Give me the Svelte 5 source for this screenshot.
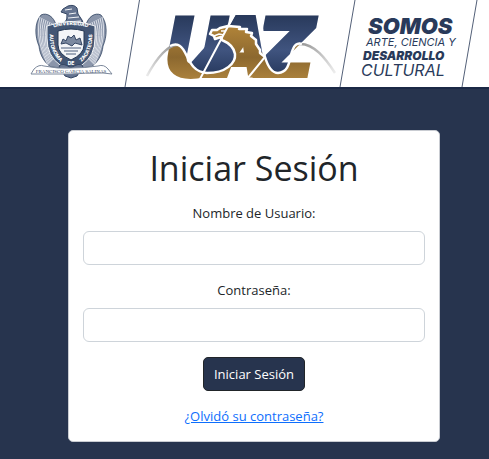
<script>
  let usuario = $state('');
  let clave = $state('');
  const wing = [0, 1, 2, 3, 4, 5, 6];
</script>

<header>
  <svg class="banner" viewBox="0 0 489 87" role="img" aria-label="Universidad Autónoma de Zacatecas">
    <defs>
      <linearGradient id="navy" x1="0" y1="16" x2="0" y2="78" gradientUnits="userSpaceOnUse">
        <stop offset="0" stop-color="#293a5c" />
        <stop offset=".55" stop-color="#40547f" />
        <stop offset="1" stop-color="#24365a" />
      </linearGradient>
      <linearGradient id="gold" x1="0" y1="26" x2="0" y2="78" gradientUnits="userSpaceOnUse">
        <stop offset="0" stop-color="#b18439" />
        <stop offset=".6" stop-color="#8c682f" />
        <stop offset="1" stop-color="#a9803c" />
      </linearGradient>
      <linearGradient id="tailLeft" x1="148" y1="75" x2="172" y2="45" gradientUnits="userSpaceOnUse">
        <stop offset="0" stop-color="#e8e8e8" />
        <stop offset="1" stop-color="#999" />
      </linearGradient>
      <linearGradient id="tailRight" x1="302" y1="44" x2="335" y2="73" gradientUnits="userSpaceOnUse">
        <stop offset="0" stop-color="#999" />
        <stop offset="1" stop-color="#eee" />
      </linearGradient>
      <pattern id="twoTone" width="489" height="87" patternUnits="userSpaceOnUse">
        <rect width="489" height="87" fill="url(#navy)" />
        <path fill="url(#gold)" d="M148 75C158 57 170 43 178 45C188 49 187 72 207 73C226 73 236 63 235 54C234 47 229 43 222 40L213 37L210 33L216 29L225 27L239 27L251 33L256 40L260 50L265 57C268 67 272 73 278 73C293 72 289 45 300 44C315 43 326 61 335 73V87H148Z" />
      </pattern>
      <path id="arcTop" d="M49 29Q71 21 93 29" />
      <path id="arcLeft" d="M50 31Q48 53 63 64" />
      <path id="arcRight" d="M79 64Q94 53 92 31" />
    </defs>

    <g class="crest">
      <g fill="#8a95aa" stroke="#354764" stroke-width=".8">
        <path d="M56 25C54 17 47 12 41 15C34 23 35 37 39 46C40 56 45 63 51 67L63 68Z" />
        <path d="M86 25C88 17 95 12 101 15C108 23 107 37 103 46C102 56 97 63 91 67L79 68Z" />
      </g>
      <g fill="none" stroke="#e4e8ee" stroke-width=".9">
        {#each wing as n}
          <path d="M{40 + n * 2} {17 + n}C{36 + n * 2} 33 {40 + n} 49 {48 + n} {65 - n}" />
          <path d="M{102 - n * 2} {17 + n}C{106 - n * 2} 33 {102 - n} 49 {94 - n} {65 - n}" />
        {/each}
      </g>
      <path d="M64 24Q68 19 67 14L61 12L63 9L68 6Q74 4 77 8L78 14L82 20L84 25Z" fill="#657490" stroke="#354764" />
      <path d="M65 10L72 9M69 14L76 13M68 18L79 17M67 22L81 21" stroke="#f2f4f7" />
      <path d="M47 26Q71 17 95 26V38Q95 56 82 65L71 70L60 65Q47 56 47 38Z" fill="#435674" stroke="#f2f4f7" />
      <path d="M58 31Q71 27 84 31V45Q84 54 71 60Q58 54 58 45Z" fill="#f4f6f8" stroke="#263854" />
      <path d="M61 44L63 39L66 41L68 36L71 38L74 35L76 40L80 38L82 45L75 43L72 46L66 43Z" fill="#7b899f" stroke="#354764" />
      <path d="M61 48H81M64 51H78M66 54H76" stroke="#a0aaba" stroke-width="2" />
      <path d="M59 66Q63 62 71 68Q79 62 83 66L77 76L71 78L65 76Z" fill="#657490" stroke="#354764" />
      <path d="M31 74L34 69Q39 64 44 66Q58 69 71 68Q85 68 98 66Q104 64 108 69L112 74L103 73Q84 73 71 74Q55 74 39 74Z" fill="#fff" stroke="#7d899c" />
      <text class="ring"><textPath href="#arcTop" startOffset="50%">UNIVERSIDAD</textPath></text>
      <text class="ring"><textPath href="#arcLeft" startOffset="50%">AUTONOMA</textPath></text>
      <text class="ring"><textPath href="#arcRight" startOffset="50%">ZACATECAS</textPath></text>
      <text class="ring" x="71" y="65">DE</text>
      <text class="ribbon" x="71" y="73">FRANCISCO GARCIA SALINAS</text>
    </g>

    <g stroke="#536078" stroke-width="1">
      <path d="M139.500 0L125 87" />
      <path d="M355 0L340 87" />
      <path d="M477 0L462 87" />
    </g>

    <path d="M225 27L239 27L251 33L256 40L260 50L265 57L247 62L244 46L233 62L227 78H201L207 73C226 73 236 63 235 54C234 47 229 43 222 40L213 37L210 33L216 29Z" fill="url(#gold)" />
    <path d="M213 38L222 40C230 43 236 50 235 57C231 69 218 74 206 73L188 66Z" fill="url(#navy)" />
    <g class="logo" fill="url(#twoTone)" stroke="url(#twoTone)" stroke-width="4" aria-hidden="true">
      <text x="164" y="76">U</text>
      <text x="209" y="76">A</text>
      <text x="257" y="76">Z</text>
    </g>
    <path d="M234 15L200 79M261 15L265 57L247 79" fill="none" stroke="#fff" stroke-width="2" />
    <path d="M147 76C157 57 169 44 178 45" fill="none" stroke="url(#tailLeft)" stroke-width="2.500" />
    <path d="M299 44C314 43 326 59 335 73" fill="none" stroke="url(#tailRight)" stroke-width="2.500" />
    <path d="M170 46Q176 43 180 46C188 51 188 72 207 73C226 73 236 63 235 54C234 47 229 43 222 40L221 37L215 39L214 36L210 34L212 30L217 30L220 28L228 26L240 27L239 29L247 29L246 32L252 33L251 36L256 40L256 44L260 50L260 53L265 57C268 67 272 73 278 73C291 72 289 57 293 49Q296 42 302 44" fill="none" stroke="#fff" stroke-width="2.500" stroke-linejoin="round" />
    <path d="M214 36L219 34L224 35M221 31L226 31" fill="none" stroke="#fff" stroke-width="1.500" />

    <g class="slogan">
      <text class="somos" x="368" y="34">SOMOS</text>
      <text class="arte" x="366" y="46">ARTE, CIENCIA Y</text>
      <text class="desarrollo" x="363" y="60">DESARROLLO</text>
      <text class="cultural" x="361" y="76">CULTURAL</text>
    </g>
  </svg>
</header>

<main>
  <form class="card" onsubmit={(e) => e.preventDefault()}>
    <h1>Iniciar Sesión</h1>
    <label for="usuario">Nombre de Usuario:</label>
    <input id="usuario" type="text" autocomplete="username" bind:value={usuario} />
    <label for="clave">Contraseña:</label>
    <input id="clave" type="password" autocomplete="current-password" bind:value={clave} />
    <button type="submit">Iniciar Sesión</button>
    <a href="#recuperar">¿Olvidó su contraseña?</a>
  </form>
</main>

<style>
  :global(body) {
    margin: 0;
    background: #27344e;
  }
  header {
    background: #fff;
    border-bottom: 2px solid #1b2946;
  }
  .banner {
    display: block;
    width: 100%;
    max-width: 489px;
  }
  text {
    font-family: Inter, "Liberation Sans", sans-serif;
  }
  .ring {
    font-size: 5px;
    font-weight: 800;
    fill: #fff;
    text-anchor: middle;
  }
  .ribbon {
    font-family: "Liberation Serif", serif;
    font-size: 5px;
    fill: #354764;
    text-anchor: middle;
  }
  .logo text {
    font-family: "DejaVu Sans", sans-serif;
    font-size: 80px;
    font-weight: 700;
    font-style: italic;
  }
  .slogan text {
    fill: #293a5a;
    font-style: italic;
  }
  .slogan .somos {
    font-size: 22px;
    font-weight: 900;
  }
  .slogan .arte {
    font-size: 11px;
  }
  .slogan .desarrollo {
    font-size: 12px;
    font-weight: 900;
  }
  .slogan .cultural {
    font-size: 16px;
  }
  main {
    padding: 41px 49px 17px 68px;
    font-family: "Open Sans", "Noto Sans", sans-serif;
    font-size: 13px;
    line-height: 21px;
    color: #212529;
  }
  .card {
    display: flex;
    flex-direction: column;
    align-items: center;
    padding: 14px;
    background: #fff;
    border: 1px solid #c9ccd2;
    border-radius: 5px;
  }
  h1 {
    margin: 0 0 12px;
    font-size: 34px;
    font-weight: 400;
    line-height: 46px;
  }
  label {
    margin-bottom: 7px;
  }
  input {
    box-sizing: border-box;
    width: 100%;
    height: 34px;
    margin: 0 0 15px;
    padding: 5px 10px;
    font: inherit;
    color: inherit;
    background: #fff;
    border: 1px solid #ced4da;
    border-radius: 6px;
  }
  button {
    height: 34px;
    margin-bottom: 15px;
    padding: 0 10px;
    font: inherit;
    color: #fff;
    background: #27344e;
    border: 1px solid #212529;
    border-radius: 5px;
  }
  a {
    color: #0d6efd;
  }
</style>
